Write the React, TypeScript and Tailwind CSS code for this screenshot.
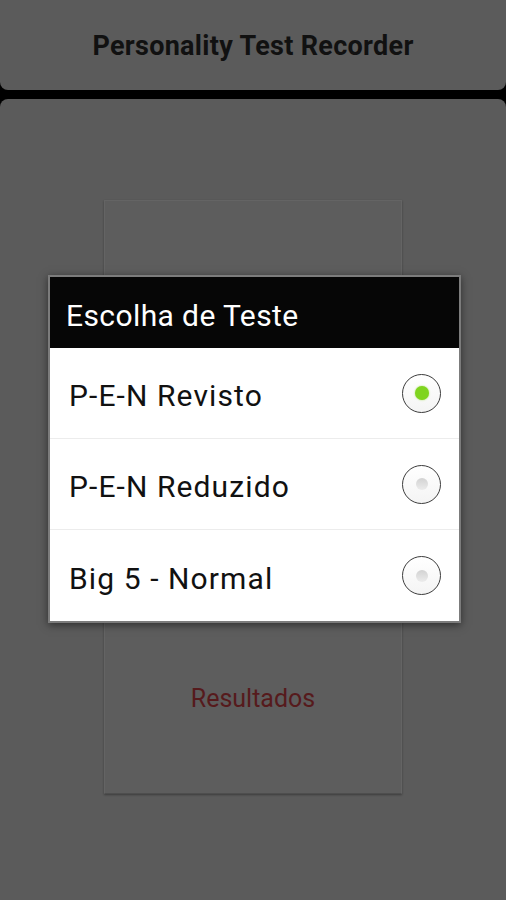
import React from 'react';

const options = [
  { label: 'P-E-N Revisto', selected: true },
  { label: 'P-E-N Reduzido', selected: false },
  { label: 'Big 5 - Normal', selected: false },
];

const Radio: React.FC<{ selected: boolean }> = ({ selected }) => (
  <div className="w-[39px] h-[39px] rounded-full border-[1.5px] border-[#3c3c3c] bg-gradient-to-b from-white to-[#f4f4f4] flex items-center justify-center">
    {selected ? (
      <span className="w-[14px] h-[14px] rounded-full bg-[#7fd41f] shadow-[0_0_2px_#a8e060]" />
    ) : (
      <span className="w-[12px] h-[12px] rounded-full bg-gradient-to-b from-[#d2d2d2] to-[#ececec]" />
    )}
  </div>
);

const App: React.FC = () => {
  return (
    <div className="relative w-[506px] h-[900px] bg-black flex flex-col overflow-hidden" style={{ fontFamily: 'Roboto, "Noto Sans", sans-serif' }}>
      {/* Header */}
      <div className="h-[90px] shrink-0 bg-[#5b5b5b] rounded-b-[8px] flex items-center justify-center pt-[3px]">
        <h1 className="text-[27px] font-bold text-[#111111] tracking-[0.3px]">
          Personality Test Recorder
        </h1>
      </div>

      {/* Main panel */}
      <div className="mt-[9px] flex-1 bg-[#5b5b5b] rounded-t-[8px] flex flex-col items-center">
        <div className="mt-[101px] w-[298px] h-[594px] border border-[#646464] border-b-[#4e4e4e] bg-[#5d5d5d] shadow-[0_1px_2px_rgba(0,0,0,0.35)] flex flex-col">
          <div className="h-[198px]" />
          <div className="h-[198px]" />
          <div className="flex-1 flex items-center justify-center pt-[7px] text-[25px] text-[#561a1c]">
            Resultados
          </div>
        </div>
      </div>

      {/* Dialog */}
      <div className="absolute left-[48px] top-[275px] w-[413px] border-[2px] border-[#7c7c7c] shadow-[0_2px_8px_rgba(0,0,0,0.5)] bg-white">
        <div className="h-[71px] bg-[#060606] flex items-center pl-[16px] pt-[5px]">
          <span className="text-[30px] text-white tracking-[0.4px]">Escolha de Teste</span>
        </div>
        {options.map((opt, i) => (
          <div
            key={opt.label}
            className={`h-[91px] flex items-center justify-between pl-[19px] pr-[18px] ${
              i < options.length - 1 ? 'border-b border-[#ececec]' : ''
            }`}
          >
            <span className="text-[30px] text-[#111111] tracking-[1.1px] pt-[5px]">
              {opt.label}
            </span>
            <Radio selected={opt.selected} />
          </div>
        ))}
      </div>
    </div>
  );
};

export default App;
